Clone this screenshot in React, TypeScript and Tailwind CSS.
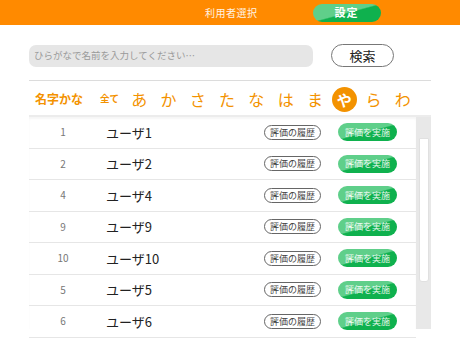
import React from "react";

const users = [
  { no: 1, name: "ユーザ1" },
  { no: 2, name: "ユーザ2" },
  { no: 4, name: "ユーザ4" },
  { no: 9, name: "ユーザ9" },
  { no: 10, name: "ユーザ10" },
  { no: 5, name: "ユーザ5" },
  { no: 6, name: "ユーザ6" },
];

const kana = ["あ", "か", "さ", "た", "な", "は", "ま", "や", "ら", "わ"];

export default function App() {
  return (
    <div
      className="w-[460px] h-[345px] bg-white overflow-hidden"
      style={{ fontFamily: '"Noto Sans CJK JP", "Noto Sans", sans-serif' }}
    >
      {/* header */}
      <div className="h-[25px] bg-[#ff8a00] flex items-center pl-[205px]">
        <span className="text-[10px] text-white/90 leading-none tracking-[0.5px]">利用者選択</span>
        <button className="ml-[55px] w-[68px] h-[18px] rounded-full bg-[linear-gradient(165deg,#5fcf8a_48%,#0fb14e_52%)] text-white text-[11px] font-bold leading-none tracking-[1px]">
          設定
        </button>
      </div>

      {/* search */}
      <div className="flex items-center pl-[29px] mt-[19px]">
        <div className="w-[284px] h-[22px] bg-[#e6e6e6] rounded-[7px] flex items-center pl-[5px]">
          <span className="text-[9.5px] text-[#9a9a9a] leading-none">ひらがなで名前を入力してください…</span>
        </div>
        <button className="ml-[18px] w-[63px] h-[23px] rounded-full border border-[#777] text-[13px] text-[#222] leading-none">
          検索
        </button>
      </div>

      <div className="mx-[29px] mt-[13px] h-px bg-[#dcdcdc]" />

      {/* kana filter */}
      <div className="flex items-center pl-[35px] h-[26px] mt-[5px]">
        <span className="w-[65px] text-[12px] font-bold text-[#f39200] leading-none">名字かな</span>
        <span className="w-[24.5px] text-[9.5px] font-bold text-[#f39200] leading-none">全て</span>
        {kana.map((k) => (
          <div key={k} className="w-[29.3px] flex justify-center">
            {k === "や" ? (
              <span className="w-[25px] h-[25px] rounded-full bg-[#f39200] text-white text-[15px] font-bold flex items-center justify-center leading-none">
                {k}
              </span>
            ) : (
              <span className="text-[16px] text-[#f39200] leading-none">{k}</span>
            )}
          </div>
        ))}
      </div>

      {/* list */}
      <div className="mx-[29px] mt-[3px] flex h-[214px] border-t-[2px] border-[#ececec]">
        <div className="flex-1 shadow-[inset_0_2px_2px_rgba(0,0,0,0.04)]">
          {users.map((u) => (
            <div key={u.no} className="h-[31.5px] flex items-center border-b border-[#e6e6e6]">
              <span className="w-[68px] text-center text-[10px] text-[#777] leading-none">{u.no}</span>
              <span className="ml-[9px] w-[158px] text-[13px] text-[#222] leading-none">{u.name}</span>
              <button className="w-[57px] h-[15px] rounded-full border border-[#666] text-[9px] text-[#444] leading-none">
                評価の履歴
              </button>
              <button className="ml-[17px] w-[59px] h-[18px] rounded-full bg-[linear-gradient(165deg,#5fcf8a_48%,#0fb14e_52%)] text-[9px] text-white/90 leading-none">
                評価を実施
              </button>
            </div>
          ))}
        </div>
        <div className="w-[15px] bg-[#e8e8e8] flex justify-center">
          <div className="mt-[21px] w-[10px] h-[144px] bg-white border border-[#e0e0e0] rounded-b-[3px]" />
        </div>
      </div>
    </div>
  );
}
